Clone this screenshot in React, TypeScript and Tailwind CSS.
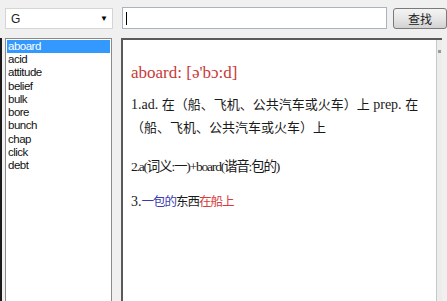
const words = ['aboard', 'acid', 'attitude', 'belief', 'bulk', 'bore', 'bunch', 'chap', 'click', 'debt']

const serif = { fontFamily: '"Liberation Serif", "Noto Sans CJK SC", serif' }

function Cn({ children, className = '' }: { children: React.ReactNode; className?: string }) {
  return <span className={'text-[13px] ' + className}>{children}</span>
}

export default function App() {
  return (
    <div className="relative w-[447px] h-[301px] overflow-hidden bg-[#f0f0f0]">
      {/* top bar */}
      <div className="flex items-start pt-[7px]">
        <div className="ml-[5px] mt-[1px] flex h-[21px] w-[108px] items-center justify-between border border-[#d5d5d5] bg-white pl-[5px] pr-[4px] font-['Liberation_Sans',sans-serif] text-[12px] text-[#222]">
          <span>G</span>
          <span className="text-[8px] leading-none text-black">▼</span>
        </div>
        <div className="ml-[9px] flex h-[22px] w-[265px] items-center border border-[#a9b3c1] bg-white pl-[3px]">
          <div className="h-[13px] w-px bg-black" />
        </div>
        <button className="ml-[6px] mt-[1px] h-[21px] w-[54px] rounded-[3px] border border-[#7a7a7a] bg-gradient-to-b from-[#f4f4f4] via-[#e6e6e6] to-[#d2d2d2] font-['Noto_Sans_CJK_SC',sans-serif] text-[12px] leading-none text-[#222]">
          查找
        </button>
      </div>

      {/* body */}
      <div className="mt-[9px] flex h-[280px]">
        <div className="w-[2px] bg-[#1a1a1a]" />
        <div className="ml-[3px] w-[107px] border border-[#8a8a8a] border-b-0 bg-white px-[1px] pt-[1px] font-['Liberation_Sans',sans-serif] text-[11.5px] tracking-[-0.5px] text-[#111]">
          {words.map((w, i) => (
            <div
              key={w}
              className={
                i === 0
                  ? 'h-[13px] bg-[#3399ff] pl-[1px] leading-[13px] text-white'
                  : 'h-[13.3px] pl-[1px] leading-[13px]'
              }
            >
              {w}
            </div>
          ))}
        </div>
        <div className="ml-[9px] flex w-[321px] border-l-2 border-t-2 border-[#5a5a5a] bg-white">
          <div className="flex-1 pl-[8px] pt-[21px] text-[#1a1a1a]" style={serif}>
            <div className="text-[17px] leading-[24px] text-[#c83a3a]">aboard: [ə'bɔ:d]</div>
            <div className="mt-[8px] text-[14px] leading-[23px]">
              1.ad. <Cn>在（船、飞机、公共汽车或火车）上</Cn> prep. <Cn>在</Cn>
              <br />
              <Cn>（船、飞机、公共汽车或火车）上</Cn>
            </div>
            <div className="mt-[16px] text-[13.5px] leading-[23px] tracking-[-1.2px]">2.a(词义:一)+board(谐音:包的)</div>
            <div className="mt-[12px] text-[14px] leading-[23px]">
              3.<span className="text-[12.5px] tracking-[-1px] text-[#3a3ab4]">一包的</span>
              <span className="text-[12.5px] tracking-[-1px]">东西</span>
              <span className="text-[12.5px] tracking-[-1px] text-[#d63c3c]">在船上</span>
            </div>
          </div>
          <div className="w-[6px] border-l border-[#c8c8c8] bg-[#ececec] pt-[10px]">
            <div className="ml-[1px] h-[3px] w-[3px] bg-[#9a9a9a]" />
          </div>
        </div>
      </div>
    </div>
  )
}
